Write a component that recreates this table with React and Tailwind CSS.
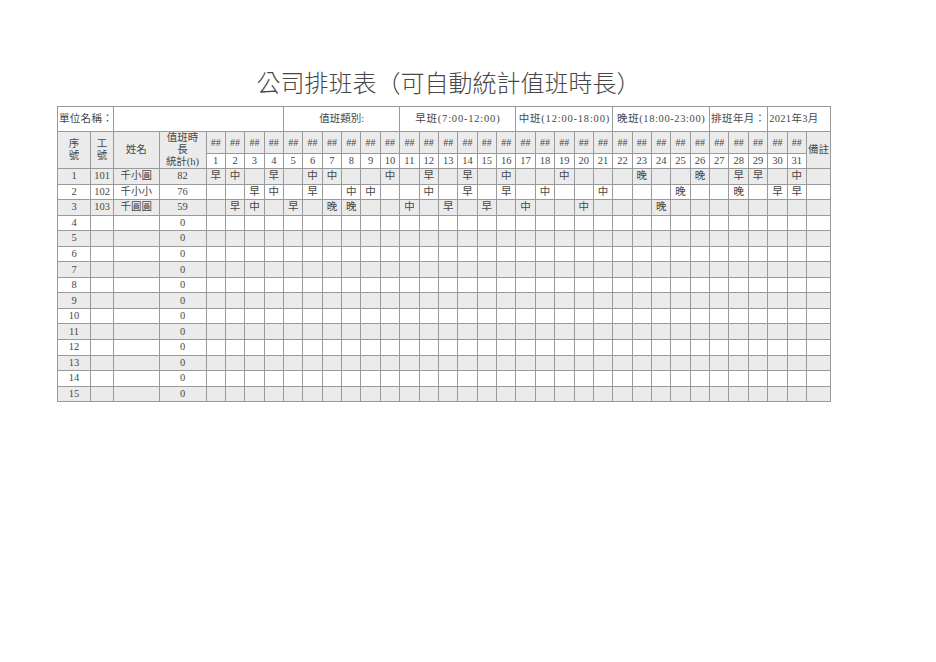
import React from 'react';

// hours per shift type
const SHIFT_HOURS = { '早': 5, '中': 6, '晚': 5 };

const DAYS = Array.from({ length: 31 }, (_, i) => i + 1);

const STAFF = [
  {
    no: 1, id: '101', name: '千小圓',
    shifts: { 1: '早', 2: '中', 4: '早', 6: '中', 7: '中', 10: '中', 12: '早', 14: '早', 16: '中', 19: '中', 23: '晚', 26: '晚', 28: '早', 29: '早', 31: '中' },
  },
  {
    no: 2, id: '102', name: '千小小',
    shifts: { 3: '早', 4: '中', 6: '早', 8: '中', 9: '中', 12: '中', 14: '早', 16: '早', 18: '中', 21: '中', 25: '晚', 28: '晚', 30: '早', 31: '早' },
  },
  {
    no: 3, id: '103', name: '千圓圓',
    shifts: { 2: '早', 3: '中', 5: '早', 7: '晚', 8: '晚', 11: '中', 13: '早', 15: '早', 17: '中', 20: '中', 24: '晚' },
  },
];

// pad the sheet out to 15 rows
const ROWS = Array.from({ length: 15 }, (_, i) => STAFF[i] || { no: i + 1, id: '', name: '', shifts: {} });

const totalHours = (shifts) =>
  Object.values(shifts).reduce((sum, s) => sum + (SHIFT_HOURS[s] || 0), 0);

const cell = 'border border-[#9a9a9a] p-0 text-center align-middle';

const App = () => {
  return (
    <div className="min-h-screen bg-white font-['Liberation_Serif','Noto_Sans_CJK_TC',serif] text-[#474747]">
      <div className="ml-[57px] w-[773px] pt-[72px]">
        <h1 className="h-[24px] pl-[10px] text-center text-[24px] leading-[24px] font-light">
          公司排班表（可自動統計值班時長）
        </h1>

        <table className="mt-[9.5px] w-[773px] table-fixed border-collapse text-[10.5px] leading-[12px]">
          <colgroup>
            <col className="w-[33px]" />
            <col className="w-[23px]" />
            <col className="w-[45.5px]" />
            <col className="w-[47px]" />
            {DAYS.map(d => <col key={d} className="w-[19.36px]" />)}
            <col className="w-[24.3px]" />
          </colgroup>
          <tbody>
            {/* sheet info row */}
            <tr className="h-[25.5px]">
              <td colSpan={2} className={`${cell} text-left pl-[1px] tracking-[0.3px]`}>單位名稱：</td>
              <td colSpan={6} className={cell}></td>
              <td colSpan={6} className={cell}>值班類別:</td>
              <td colSpan={6} className={`${cell} tracking-[0.8px]`}>早班(7:00-12:00)</td>
              <td colSpan={5} className={`${cell} tracking-[0.8px] whitespace-nowrap`}>中班(12:00-18:00)</td>
              <td colSpan={5} className={`${cell} tracking-[0.6px] whitespace-nowrap`}>晚班(18:00-23:00)</td>
              <td colSpan={3} className={`${cell} text-left pl-[1px] tracking-[0.4px]`}>排班年月：</td>
              <td colSpan={3} className={`${cell} text-left pl-[1px] tracking-[0.3px]`}>2021年3月</td>
            </tr>

            {/* column headers */}
            <tr className="h-[22px] bg-[#ebebeb]">
              <td rowSpan={2} className={cell}>序<br />號</td>
              <td rowSpan={2} className={cell}>工<br />號</td>
              <td rowSpan={2} className={cell}>姓名</td>
              <td rowSpan={2} className={cell}>值班時<br />長<br />統計(h)</td>
              {DAYS.map(d => (
                <td key={d} className={`${cell} text-[10px]`}>##</td>
              ))}
              <td rowSpan={2} className={cell}>備註</td>
            </tr>
            <tr className="h-[15px]">
              {DAYS.map(d => (
                <td key={d} className={`${cell} bg-white`}>{d}</td>
              ))}
            </tr>

            {ROWS.map(r => (
              <tr key={r.no} className={`h-[15.55px] ${r.no % 2 === 1 ? 'bg-[#ebebeb]' : 'bg-white'}`}>
                <td className={cell}>{r.no}</td>
                <td className={cell}>{r.id}</td>
                <td className={cell}>{r.name}</td>
                <td className={cell}>{totalHours(r.shifts)}</td>
                {DAYS.map(d => (
                  <td key={d} className={cell}>{r.shifts[d] || ''}</td>
                ))}
                <td className={cell}></td>
              </tr>
            ))}
          </tbody>
        </table>
      </div>
    </div>
  );
};

export default App;
